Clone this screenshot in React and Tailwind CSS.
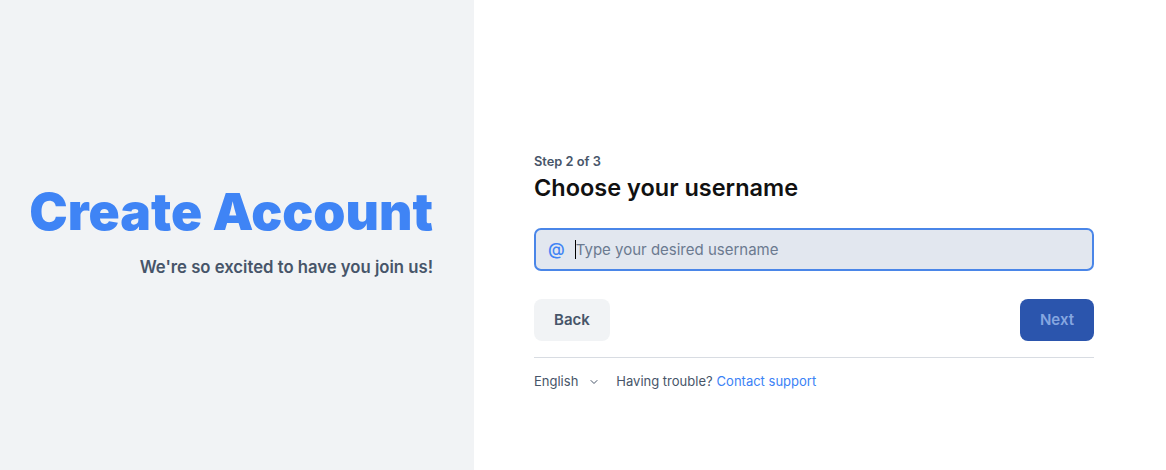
import { ChevronDown } from "lucide-react";

function App() {
  return (
    <div
      className="flex h-[470px] w-full bg-white"
      style={{ fontFamily: "Inter, 'Noto Sans', sans-serif" }}
    >
      <div className="flex w-[474px] shrink-0 flex-col items-end justify-center bg-[#f1f3f5] pr-[41px] pb-[8px]">
        <h1 className="text-[51.5px] leading-[60px] font-black text-[#3f84f5]">
          Create Account
        </h1>
        <p className="mt-[14px] text-[16.7px] font-semibold text-[#475569]">
          We're so excited to have you join us!
        </p>
      </div>

      <div className="flex flex-1 flex-col justify-center pl-[60px] pt-[74px]">
        <div className="w-[560px]">
          <div className="text-[12.8px] font-semibold text-[#475569]">
            Step 2 of 3
          </div>
          <h2 className="mt-[2px] text-[23.5px] leading-[30px] font-semibold text-[#111111]">
            Choose your username
          </h2>

          <div className="mt-[25px] flex h-[43px] items-center rounded-[7px] border-2 border-[#4a86e8] bg-[#e2e7ef] pl-[12px]">
            <span className="text-[17px] font-medium text-[#3f84f5]">@</span>
            <div className="ml-[10px] flex items-center">
              <span className="h-[19px] w-px bg-black" />
              <span className="text-[15px] text-[#6b7a90]">
                Type your desired username
              </span>
            </div>
          </div>

          <div className="mt-[28px] flex items-center justify-between">
            <button className="h-[42px] w-[76px] rounded-[8px] bg-[#f1f3f5] text-[15px] font-semibold text-[#475569]">
              Back
            </button>
            <button className="h-[42px] w-[74px] rounded-[8px] bg-[#2b55ad] text-[15px] font-semibold text-[#86a6e0]">
              Next
            </button>
          </div>

          <div className="mt-[16px] border-t border-[#d8dce2]" />

          <div className="mt-[14px] flex items-center text-[13px] text-[#475569]">
            <span>English</span>
            <ChevronDown className="ml-[10px] h-[12px] w-[12px]" strokeWidth={2} />
            <span className="ml-[16px]">Having trouble?</span>
            <span className="ml-[4px] text-[#3b82f6]">Contact support</span>
          </div>
        </div>
      </div>
    </div>
  );
}

export default App;
